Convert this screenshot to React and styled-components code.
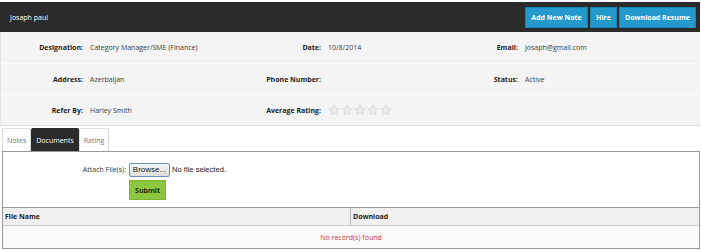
import React from 'react';
import styled, { createGlobalStyle } from 'styled-components';

const GlobalStyle = createGlobalStyle`
  body {
    margin: 0;
    background: #fff;
    font-family: "Open Sans", "DejaVu Sans", sans-serif;
    font-size: 7px;
    color: #333;
  }
`;

const Page = styled.div`
  width: 702px;
  height: 250px;
  padding: 2px 2px 0 0;
  box-sizing: border-box;
`;

const Header = styled.div`
  display: flex;
  align-items: center;
  justify-content: space-between;
  height: 30px;
  background: #2b2b2b;
  padding: 0 4px 0 10px;
  box-sizing: border-box;
`;

const Title = styled.div`
  color: #fff;
  font-size: 7px;
`;

const ButtonRow = styled.div`
  display: flex;
  gap: 2px;
`;

const HeadButton = styled.button`
  height: 21px;
  width: ${p => p.w}px;
  padding: 0;
  border: 1px solid #1785b3;
  background: #2399cc;
  color: #fff;
  font-family: "Open Sans", sans-serif;
  font-weight: 700;
  font-size: 7px;
  cursor: pointer;
`;

const InfoPanel = styled.div`
  background: #f4f4f4;
  border-left: 1px solid #e2e2e2;
  border-bottom: 1px solid #e2e2e2;
`;

const InfoRow = styled.div`
  display: grid;
  grid-template-columns: 89px 151px 87px 117px 80px 1fr;
  align-items: center;
  height: 31px;
  border-top: ${p => (p.first ? 'none' : '1px solid #fbfbfb')};
  box-sizing: border-box;
`;

const Label = styled.div`
  text-align: right;
  padding-right: 7px;
  font-weight: 700;
  color: #1e1e1e;
`;

const Value = styled.div`
  color: #3a3a3a;
`;

const Stars = styled.div`
  display: flex;
  gap: 1px;
`;

const Tabs = styled.div`
  display: flex;
  margin: 2px 0 0 2px;
  height: 23px;
`;

const Tab = styled.div`
  display: flex;
  align-items: center;
  padding: 0 4px;
  background: ${p => (p.active ? '#2b2b2b' : '#fff')};
  color: ${p => (p.active ? '#fff' : '#777')};
  border: 1px solid ${p => (p.active ? '#2b2b2b' : '#ddd')};
  border-bottom: none;
  border-radius: 2px 2px 0 0;
`;

const Content = styled.div`
  margin-left: 2px;
  border: 1px solid #999;
  border-bottom: none;
  height: 56px;
  box-sizing: border-box;
  display: grid;
  grid-template-columns: 126px auto;
  grid-template-rows: 21px 28px;
  padding-top: 7px;
  row-gap: 0;
`;

const FieldLabel = styled.div`
  text-align: right;
  padding-right: 3px;
  align-self: center;
  color: #333;
`;

const FileRow = styled.div`
  display: flex;
  align-items: center;
  gap: 2px;
  align-self: center;
`;

const BrowseButton = styled.button`
  height: 14px;
  width: 41px;
  padding: 0;
  border: 1px solid #6e8fb5;
  border-radius: 2px;
  background: linear-gradient(#f5f5f5, #dedede);
  font-family: "Liberation Sans", Arial, sans-serif;
  font-size: 8px;
  color: #222;
`;

const FileText = styled.span`
  font-family: "Liberation Sans", Arial, sans-serif;
  font-size: 7.6px;
  color: #222;
`;

const SubmitButton = styled.button`
  grid-column: 2;
  width: 37px;
  height: 20px;
  border: 1px solid #7fb333;
  background: #8dc63f;
  color: #1d2a0c;
  font-family: "Open Sans", sans-serif;
  font-weight: 700;
  font-size: 7px;
  padding: 0;
`;

const Table = styled.div`
  margin-left: 2px;
  border: 1px solid #999;
  display: grid;
  grid-template-columns: 348px 1fr;
`;

const HeadCell = styled.div`
  height: 17px;
  display: flex;
  align-items: center;
  padding-left: 2px;
  background: #f0f0f0;
  font-weight: 700;
  color: #222;
  border-bottom: 1px solid #ccc;
  border-right: ${p => (p.last ? 'none' : '1px solid #bbb')};
`;

const EmptyCell = styled.div`
  grid-column: 1 / span 2;
  height: 22px;
  display: flex;
  align-items: center;
  justify-content: center;
  background: #fafafa;
  color: #d0343b;
`;

const StarIcon = () => (
  <svg width="12" height="12" viewBox="0 0 24 24">
    <path
      d="M12 1.8l3.1 6.6 7.2.9-5.3 5 1.4 7.1L12 17.9l-6.4 3.5 1.4-7.1-5.3-5 7.2-.9z"
      fill="#ececec"
      stroke="#d6d6d6"
      strokeWidth="1.6"
      strokeLinejoin="round"
    />
  </svg>
);

const info = [
  [['Designation:', 'Category Manager/SME (Finance)'], ['Date:', '10/8/2014'], ['Email:', 'josaph@gmail.com']],
  [['Address:', 'Azerbaijan'], ['Phone Number:', ''], ['Status:', 'Active']],
  [['Refer By:', 'Harley Smith'], ['Average Rating:', 'stars'], ['', '']],
];

export default function App() {
  return (
    <Page>
      <GlobalStyle />
      <Header>
        <Title>Josaph paul</Title>
        <ButtonRow>
          <HeadButton w={63}>Add New Note</HeadButton>
          <HeadButton w={27}>Hire</HeadButton>
          <HeadButton w={77}>Download Resume</HeadButton>
        </ButtonRow>
      </Header>
      <InfoPanel>
        {info.map((row, i) => (
          <InfoRow key={i} first={i === 0}>
            {row.map(([label, value], j) => (
              <React.Fragment key={j}>
                <Label>{label}</Label>
                {value === 'stars' ? (
                  <Stars>
                    {[0, 1, 2, 3, 4].map(s => <StarIcon key={s} />)}
                  </Stars>
                ) : (
                  <Value>{value}</Value>
                )}
              </React.Fragment>
            ))}
          </InfoRow>
        ))}
      </InfoPanel>
      <Tabs>
        <Tab>Notes</Tab>
        <Tab active>Documents</Tab>
        <Tab>Rating</Tab>
      </Tabs>
      <Content>
        <FieldLabel>Attach File(s):</FieldLabel>
        <FileRow>
          <BrowseButton>Browse...</BrowseButton>
          <FileText>No file selected.</FileText>
        </FileRow>
        <SubmitButton>Submit</SubmitButton>
      </Content>
      <Table>
        <HeadCell>File Name</HeadCell>
        <HeadCell last>Download</HeadCell>
        <EmptyCell>No record(s) found</EmptyCell>
      </Table>
    </Page>
  );
}
